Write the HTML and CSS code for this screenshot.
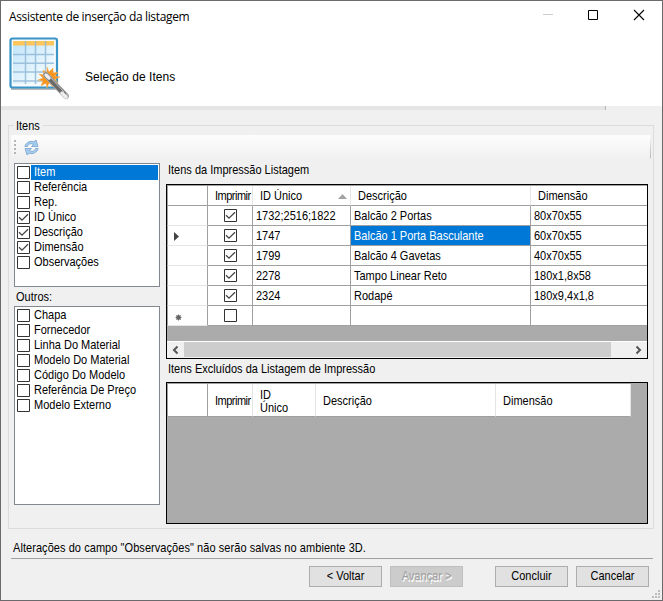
FILE: index.html
```html
<!DOCTYPE html>
<html lang="pt-BR">
<head>
<meta charset="utf-8">
<title>Assistente de inserção da listagem</title>
<link rel="stylesheet" href="styles.css">
</head>
<body>
<svg class="defs" width="0" height="0">
  <symbol id="box" viewBox="0 0 13 13"><path d="M.5.5h12v12H.5z" fill="#fff" stroke="#333"/></symbol>
  <symbol id="checked" viewBox="0 0 13 13"><path d="M.5.5h12v12H.5z" fill="#fff" stroke="#333"/><path d="M2 6.2l3 3 6-6" fill="none" stroke="#444" stroke-width="1.3"/></symbol>
</svg>
<div class="window">
  <header class="header">
    <div class="titlebar">
      <span class="title">Assistente de inserção da listagem</span>
      <svg class="controls" width="106" height="12" viewBox="0 0 106 12"><path d="M1 5.5h10" stroke="#ccc"/><path d="M46.500 1.500h9v9h-9z" fill="none" stroke="#000"/><path d="M92 1l10 10M102 1l-10 10" stroke="#000" stroke-width="1.100"/></svg>
    </div>
    <div class="banner">
      <svg width="62" height="66" viewBox="0 0 62 66">
        <defs>
          <linearGradient id="sheet" x1="0" y1="0" x2="1" y2="1"><stop offset="0" stop-color="#c2e5fa"/><stop offset=".6" stop-color="#e6f5fd"/><stop offset="1" stop-color="#fff"/></linearGradient>
          <linearGradient id="wand" x1="0" y1="1" x2="1" y2="0"><stop offset="0" stop-color="#999"/><stop offset=".5" stop-color="#666"/><stop offset="1" stop-color="#aaa"/></linearGradient>
        </defs>
        <path d="M2 53h46" stroke="#bbb" stroke-width="2"/>
        <rect x="1.500" y="2.500" width="46.500" height="49" rx="2" fill="#f6fbfe" stroke="#3a94c6" stroke-width="2.200"/>
        <path d="M4 9h41v39H4z" fill="url(#sheet)"/>
        <path d="M4 5h41v4.500H4z" fill="#fdc65c"/>
        <path d="M4 18.500h41M4 27.300h41M4 36h41M4 45h41M16.500 5v43M26.500 5v43M36.500 5v43" stroke="#91bad8" stroke-width="1.500" opacity=".85"/>
        <path d="M38 31l2 5 4-4v5l5-1-3 4 5 1-5 2 3 4-5-1v5l-4-4-2 5-1-5-5 3 2-5-5-1 5-2-4-4 5 1-1-5 4 3z" fill="#f7941d" stroke="#f9ad4b" stroke-width=".5"/>
        <path d="M37 39l20 21" stroke="#aaa" stroke-width="6" stroke-linecap="round"/>
        <path d="M37 39l18 19" stroke="url(#wand)" stroke-width="4.500" stroke-linecap="round"/>
        <path d="M37 39l3 3M53 57l4 4" stroke="#eee" stroke-width="3.500" stroke-linecap="round"/>
        <path d="M41 41l14 15" stroke="#bbb"/>
      </svg>
      <span class="step">Seleção de Itens</span>
    </div>
  </header>
  <div class="strip"></div>
  <section class="group">
    <div class="legend"><span class="t">Itens</span></div>
    <div class="toolbar">
      <svg width="3" height="15" viewBox="0 0 3 15"><path d="M1 0v15" stroke="#b5b5b5" stroke-width="2" stroke-dasharray="2 2"/></svg>
      <svg width="15" height="15" viewBox="0 0 15 15"><path d="M.8 6.500C2 2.500 6 .3 10 1.800L12 0l2 6.500H7.500L9.500 4.500C7 3 4 3.700 3.500 6.500z" fill="#a5cbec" stroke="#7aa5d0" stroke-width=".8"/><path d="M14.200 8.500C13 12.500 9 14.700 5 13.200L3 15 1 8.500h6.500L5.500 10.500C8 12 11 11.300 11.500 8.500z" fill="#a5cbec" stroke="#7aa5d0" stroke-width=".8"/></svg>
    </div>
    <div class="columns">
      <div class="left">
        <div class="list fields">
          <div class="item selected"><svg><use href="#box"/></svg><span class="label"><span class="t">Item</span></span></div>
          <div class="item"><svg><use href="#box"/></svg><span class="label"><span class="t">Referência</span></span></div>
          <div class="item"><svg><use href="#box"/></svg><span class="label"><span class="t">Rep.</span></span></div>
          <div class="item"><svg><use href="#checked"/></svg><span class="label"><span class="t">ID Único</span></span></div>
          <div class="item"><svg><use href="#checked"/></svg><span class="label"><span class="t">Descrição</span></span></div>
          <div class="item"><svg><use href="#checked"/></svg><span class="label"><span class="t">Dimensão</span></span></div>
          <div class="item"><svg><use href="#box"/></svg><span class="label"><span class="t">Observações</span></span></div>
        </div>
        <div class="caption others"><span class="t">Outros:</span></div>
        <div class="list extra">
          <div class="item"><svg><use href="#box"/></svg><span class="label"><span class="t">Chapa</span></span></div>
          <div class="item"><svg><use href="#box"/></svg><span class="label"><span class="t">Fornecedor</span></span></div>
          <div class="item"><svg><use href="#box"/></svg><span class="label"><span class="t">Linha Do Material</span></span></div>
          <div class="item"><svg><use href="#box"/></svg><span class="label"><span class="t">Modelo Do Material</span></span></div>
          <div class="item"><svg><use href="#box"/></svg><span class="label"><span class="t">Código Do Modelo</span></span></div>
          <div class="item"><svg><use href="#box"/></svg><span class="label"><span class="t">Referência De Preço</span></span></div>
          <div class="item"><svg><use href="#box"/></svg><span class="label"><span class="t">Modelo Externo</span></span></div>
        </div>
      </div>
      <div class="right">
        <div class="caption included"><span class="t">Itens da Impressão Listagem</span></div>
        <div class="table main">
          <div class="row head"><div></div><div><span class="t tight">Imprimir</span></div><div><span class="t">ID Único</span><svg class="sort" width="9" height="5"><path d="M0 5l4.500-5L9 5z" fill="#a3a3a3"/></svg></div><div><span class="t">Descrição</span></div><div><span class="t">Dimensão</span></div></div>
          <div class="row"><div></div><div><svg><use href="#checked"/></svg></div><div><span class="t">1732;2516;1822</span></div><div><span class="t">Balcão 2 Portas</span></div><div><span class="t">80x70x55</span></div></div>
          <div class="row"><div><svg class="arrow" viewBox="0 0 5 9"><path d="M0 0l5 4.500L0 9z" fill="#444"/></svg></div><div><svg><use href="#checked"/></svg></div><div><span class="t">1747</span></div><div class="active"><span class="t">Balcão 1 Porta Basculante</span></div><div><span class="t">60x70x55</span></div></div>
          <div class="row"><div></div><div><svg><use href="#checked"/></svg></div><div><span class="t">1799</span></div><div><span class="t">Balcão 4 Gavetas</span></div><div><span class="t">40x70x55</span></div></div>
          <div class="row"><div></div><div><svg><use href="#checked"/></svg></div><div><span class="t">2278</span></div><div><span class="t">Tampo Linear Reto</span></div><div><span class="t">180x1,8x58</span></div></div>
          <div class="row"><div></div><div><svg><use href="#checked"/></svg></div><div><span class="t">2324</span></div><div><span class="t">Rodapé</span></div><div><span class="t">180x9,4x1,8</span></div></div>
          <div class="row"><div><svg class="star" viewBox="0 0 7 7"><circle cx="3.500" cy="3.500" r="2.300" fill="#444"/><path d="M3.500.5v6M.5 3.500h6M1.300 1.300l4.400 4.400M5.700 1.300L1.300 5.700" stroke="#666" stroke-width=".9"/></svg></div><div><svg><use href="#box"/></svg></div><div></div><div></div><div></div></div>
          <div class="scroll">
            <svg width="17" height="16"><path d="M10.500 4.500L7 8l3.500 3.500" fill="none" stroke="#555" stroke-width="2"/></svg>
            <div class="thumb"></div>
            <svg width="17" height="16"><path d="M6.500 4.500L10 8l-3.500 3.500" fill="none" stroke="#555" stroke-width="2"/></svg>
          </div>
        </div>
        <div class="caption excluded"><span class="t">Itens Excluídos da Listagem de Impressão</span></div>
        <div class="table rejected">
          <div class="row head"><div></div><div><span class="t tight">Imprimir</span></div><div><span class="t">ID<br>Único</span></div><div><span class="t">Descrição</span></div><div><span class="t">Dimensão</span></div></div>
        </div>
      </div>
    </div>
  </section>
  <div class="note"><span class="t">Alterações do campo "Observações" não serão salvas no ambiente 3D.</span></div>
  <footer class="footer">
    <button><span class="t">&lt; Voltar</span></button>
    <button class="off" disabled><span class="t">Avançar &gt;</span></button>
    <button class="finish"><span class="t">Concluir</span></button>
    <button><span class="t">Cancelar</span></button>
  </footer>
  <svg class="grip" width="9" height="9"><path d="M6 0h2v2H6zM3 3h2v2H3zM6 3h2v2H6zM0 6h2v2H0zM3 6h2v2H3zM6 6h2v2H6z" fill="#bdbdbd"/></svg>
</div>
</body>
</html>
```
FILE: styles.css
```css
* { box-sizing: border-box; }
body { margin: 0; font: 11px/15px "Liberation Sans", Arial, sans-serif; color: #000; }
svg { display: block; flex: none; }
.defs { position: absolute; }
.window { position: relative; width: 663px; height: 601px; border: 1px solid #6b696b; background: #f0f0f0; display: flex; flex-direction: column; overflow: hidden; }
.t { display: inline-block; white-space: nowrap; transform: scaleY(1.12); }
.tight { letter-spacing: -.5px; }

.header { height: 105px; flex: none; background: #fff; }
.titlebar { height: 31px; display: flex; justify-content: space-between; align-items: center; padding: 0 14px 0 8px; }
.title { font: 12px/16px "Open Sans", sans-serif; letter-spacing: -.35px; white-space: nowrap; }
.controls { margin-top: -3px; }
.banner { display: flex; padding: 4px 0 0 8px; }
.step { font-size: 12px; letter-spacing: .06px; margin: 34px 0 0 14px; }
.strip { width: 605px; height: 4px; flex: none; background: #e5e5e5; border-right: 1px solid #b5b5b5; }

.group { width: 646px; height: 404px; flex: none; margin: 15px 0 0 7px; border: 1px solid #dcdcdc; display: flex; flex-direction: column; }
.legend { align-self: flex-start; height: 15px; margin: -7px 0 1px 5px; padding: 0 3px 0 2px; background: #f0f0f0; }
.toolbar { height: 24px; margin: 0 2px; border-radius: 2px; padding: 0 3px 0 3px; display: flex; align-items: center; gap: 7px; background: linear-gradient(transparent, #b5b5b5) right / 1px 100% no-repeat, linear-gradient(#fdfdfd, #f0f0f0); }
.columns { display: flex; gap: 6px; padding: 4px 0 0 5px; }
.left { width: 146px; display: flex; flex-direction: column; }
.right { width: 482px; }
.list { background: #fff; border: 1px solid #828790; padding: 1px 1px 0 2px; }
.fields { height: 124px; }
.extra { height: 199px; }
.item { display: flex; height: 15px; align-items: center; }
.item svg { width: 13px; height: 13px; }
.label { flex: 1; height: 15px; margin-left: 1px; padding-left: 3px; }
.selected .label { background: #0078d7; color: #fff; }
.caption { height: 15px; padding-left: 2px; }
.others { height: 19px; padding-top: 3px; }
.included { height: 21px; }
.excluded { height: 23px; padding-top: 3px; }

.table { border: 1px solid #000; background: #ababab; display: flex; flex-direction: column; }
.table .t { position: relative; top: 1px; }
.main { height: 175px; }
.rejected { height: 142px; }
.row { display: grid; grid-template-columns: 41px 45px 98px 180px 1fr; height: 20px; flex: none; background: #fff; }
.row > div { display: flex; align-items: center; padding-left: 3px; border-right: 1px solid #a0a0a0; border-bottom: 1px solid #a0a0a0; min-width: 0; }
.row > div:first-child { padding-left: 6px; border-left: 1px solid #a0a0a0; }
.row:not(.head) > div:first-child { border-bottom-color: #e5e5e5; }
.row > div:nth-child(2) { justify-content: center; padding-left: 0; }
.row > div:last-child { border-right: 0; }
.row svg { width: 13px; height: 13px; }
.row > .active { background: #0078d7; color: #fff; }
.row .arrow { width: 5px; height: 9px; margin-top: 1px; }
.row .star { width: 7px; height: 7px; margin: 3px 0 0 1px; }
.head > div { padding-left: 7px; border-right-color: #e5e5e5; }
.main .head { height: 21px; border-top: 1px solid #a0a0a0; }
.head > div:first-child { border-right-color: #a0a0a0; }
.head > div:nth-child(2) { justify-content: flex-start; padding-left: 7px; }
.row .sort { width: 9px; height: 5px; margin: 2px 3px 0 auto; }
.scroll { margin-top: auto; height: 17px; border-top: 1px solid #fff; background: #f0f0f0; display: flex; justify-content: space-between; }
.thumb { flex: 1; margin-right: 19px; height: 15px; background: #cdcdcd; }
.rejected .row { width: 464px; height: 34px; grid-template-columns: 41px 45px 63px 180px 135px; border-top: 1px solid #a0a0a0; line-height: 12px; }
.rejected .row > div:last-child { border-right: 1px solid #e5e5e5; }

.note { height: 30px; flex: none; margin: 0 9px 0 10px; padding: 12px 0 0 2px; border-bottom: 1px solid #a0a0a0; letter-spacing: .06px; }
.footer { display: flex; justify-content: flex-end; gap: 8px; padding: 7px 13px 0 0; }
button { width: 73px; height: 21px; padding: 0 0 1px; border: 1px solid #adadad; background: #e1e1e1; color: #000; font: inherit; }
.off { border-color: #bfbfbf; background: #ccc; color: #a0a0a0; text-shadow: 1px 1px #fff; }
.finish { margin-left: 24px; }
.grip { position: absolute; right: 1px; bottom: 1px; }
```
